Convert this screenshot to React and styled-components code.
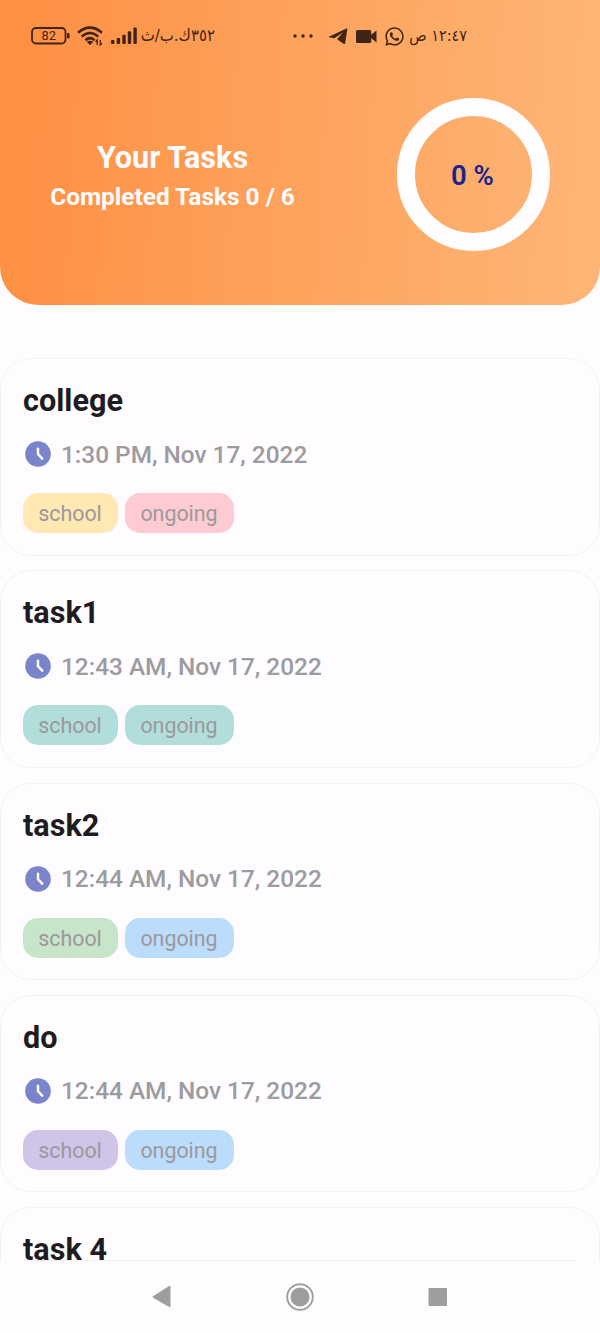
import React from "react";
import styled, { createGlobalStyle } from "styled-components";
import { FaWhatsapp } from "react-icons/fa";

const GlobalStyle = createGlobalStyle`
  * { box-sizing: border-box; }
  body { margin: 0; background: #fefcff; font-family: Roboto, "Liberation Sans", sans-serif; }
`;

const Screen = styled.div`
  width: 600px;
  height: 1333px;
  display: flex;
  flex-direction: column;
  overflow: hidden;
  background: #fefcff;
`;

const Header = styled.header`
  flex: none;
  height: 305px;
  border-radius: 0 0 38px 38px;
  background: linear-gradient(93deg, #ff9145 6%, #fdb475 94%);
`;

const StatusBar = styled.div`
  height: 70px;
  padding: 2px 0 0 31px;
  display: flex;
  align-items: center;
  color: #402414;

  svg { display: block; flex: none; }
`;

const StatusText = styled.span`
  flex: none;
  width: ${(p) => p.$width}px;
  margin-left: ${(p) => p.$gap}px;
  font-family: "DejaVu Sans Condensed", "DejaVu Sans", sans-serif;
  font-stretch: condensed;
  font-size: ${(p) => p.$size}px;
  line-height: 26px;
  white-space: nowrap;
`;

const Spacer = styled.span`
  flex: none;
  width: ${(p) => p.$width}px;
`;

const Summary = styled.div`
  display: flex;
  justify-content: space-between;
  padding: 28px 50px 0;
`;

const SummaryText = styled.div`
  padding-top: 42px;
  width: 245px;
  display: flex;
  flex-direction: column;
  align-items: center;
  color: #fffdff;
  white-space: nowrap;
`;

const Heading = styled.h1`
  margin: 0;
  font-size: 30.6px;
  line-height: 36px;
  font-weight: 700;
`;

const Completed = styled.div`
  margin-top: 6px;
  font-size: 24.4px;
  line-height: 29px;
  font-weight: 700;
`;

const Ring = styled.div`
  width: 153px;
  height: 153px;
  padding: 2px 2px 0 0;
  border: 18px solid #fffdff;
  border-radius: 50%;
  display: flex;
  align-items: center;
  justify-content: center;
  color: #17248b;
  font-size: 27.5px;
  font-weight: 600;
`;

const TaskList = styled.main`
  flex: none;
  height: 956px;
  padding-top: 53px;
  display: flex;
  flex-direction: column;
  gap: 14.75px;
  overflow: hidden;
`;

const Card = styled.article`
  flex: none;
  height: 197.5px;
  padding: 23px 22px 0;
  border: 1px solid #f2f0f3;
  border-radius: 31px;
`;

const TaskName = styled.h2`
  margin: 0;
  font-size: 30.6px;
  line-height: 38px;
  font-weight: 700;
  color: #1e1c1f;
`;

const TimeRow = styled.div`
  margin-top: 18px;
  height: 32px;
  padding-left: 2px;
  display: flex;
  align-items: center;
  gap: 10px;
  font-size: 24.4px;
  font-weight: 500;
  color: #9c9b9d;
  white-space: nowrap;

  svg { display: block; }
`;

const Tags = styled.div`
  display: flex;
  gap: 7px;
  margin-top: 23px;
`;

const Tag = styled.span`
  width: ${(p) => p.$width}px;
  height: 40px;
  padding-right: 1px;
  border-radius: 15px;
  background: ${(p) => p.$color};
  color: #9b999c;
  font-size: 21.4px;
  line-height: 41px;
  text-align: center;
`;

const NavBar = styled.nav`
  flex: none;
  height: 72px;
  display: flex;
  justify-content: center;
  align-items: center;
  position: relative;

  svg { display: block; }
`;

const Divider = styled.div`
  position: absolute;
  top: -1px;
  left: 25px;
  right: 25px;
  height: 1px;
  background: #f1eff1;
`;

const Battery = () => (
  <svg width="40" height="18" viewBox="0 0 40 18">
    <rect x="1" y="1" width="33.5" height="15.5" rx="4" fill="none" stroke="currentColor" strokeWidth="1.8" />
    <rect x="36" y="6" width="2.5" height="5.5" rx="1" fill="currentColor" />
    <text x="17.7" y="13.3" textAnchor="middle" fontFamily="Roboto, sans-serif" fontSize="12.8" fill="currentColor">82</text>
  </svg>
);

const Wifi = () => (
  <svg width="27" height="20" viewBox="0 0 27 20" fill="none" stroke="currentColor" strokeWidth="2.5">
    <path d="M1 6.7Q13-3.4 25 6.7M4.7 10.6Q13 3.4 21.3 10.6M8.4 14.2Q13 10.1 17.6 14.2" />
    <path d="M9.8 15.9Q13 13.4 16.2 15.9L13 19Z" fill="currentColor" stroke="none" />
    <path d="M20.2 19v-5l-1.6 1.8M23.3 14v5l1.6-1.8" strokeWidth="1.3" />
  </svg>
);

const Signal = () => (
  <svg width="27" height="18" viewBox="0 0 27 18" fill="currentColor">
    <rect x="0" y="13" width="3.4" height="4" rx="1" />
    <rect x="5.7" y="11" width="3.4" height="6" rx="1" />
    <rect x="11.3" y="7.7" width="3.4" height="9.3" rx="1" />
    <rect x="16.8" y="4.2" width="3.4" height="12.8" rx="1" />
    <rect x="22.4" y="0.5" width="3.4" height="16.5" rx="1" />
  </svg>
);

const More = () => (
  <svg width="20" height="4" viewBox="0 0 20 4" fill="currentColor">
    <circle cx="2" cy="2" r="1.7" /><circle cx="10" cy="2" r="1.7" /><circle cx="18" cy="2" r="1.7" />
  </svg>
);

const Telegram = () => (
  <svg width="19" height="17" viewBox="0 0 19 17" fill="currentColor">
    <path d="M0.4 8.4L17.4 0.6Q18.5 0.2 18.3 1.5L16.2 15.1Q15.9 16.7 14.5 15.8L8.7 11.7Q8 11 8.8 10.2L14.2 4.3L6.2 9.8Q5.3 10.4 4.3 10.1L0.6 9.4Q-.3 9 .4 8.4Z" />
  </svg>
);

const Camera = () => (
  <svg width="21" height="15" viewBox="0 0 21 15" fill="currentColor">
    <path d="M1.5 1H13.7Q15.2 1 15.2 2.5V5.8L20.5 1.5V13.5L15.2 9.2V12.5Q15.2 14 13.7 14H1.5Q0 14 0 12.5V2.5Q0 1 1.5 1Z" />
  </svg>
);

const Clock = () => (
  <svg width="26" height="26" viewBox="0 0 26 26">
    <circle cx="13" cy="13" r="12.8" fill="#7984cb" />
    <path d="M13 7.7V13.2L17.2 17.6" fill="none" stroke="#fefcff" strokeWidth="2.5" strokeLinecap="round" strokeLinejoin="round" />
  </svg>
);

const tasks = [
  { name: "college", time: "1:30 PM, Nov 17, 2022", school: "#ffe8b2", ongoing: "#ffcbd2" },
  { name: "task1", time: "12:43 AM, Nov 17, 2022", school: "#b1dedb", ongoing: "#b1dedb" },
  { name: "task2", time: "12:44 AM, Nov 17, 2022", school: "#c7e5c9", ongoing: "#bbdcfb" },
  { name: "do", time: "12:44 AM, Nov 17, 2022", school: "#d0c4e9", ongoing: "#bbdcfb" },
  { name: "task 4" },
];

const TaskCard = ({ task }) => (
  <Card>
    <TaskName>{task.name}</TaskName>
    {task.time && (
      <>
        <TimeRow><Clock />{task.time}</TimeRow>
        <Tags>
          <Tag $width={95} $color={task.school}>school</Tag>
          <Tag $width={109} $color={task.ongoing}>ongoing</Tag>
        </Tags>
      </>
    )}
  </Card>
);

export default function App() {
  return (
    <Screen>
      <GlobalStyle />
      <Header>
        <StatusBar>
          <Battery />
          <Spacer $width={6} />
          <Wifi />
          <Spacer $width={7} />
          <Signal />
          <StatusText dir="rtl" $width={74} $gap={3} $size={16.6}>٣٥٢ك.ب/ث</StatusText>
          <Spacer $width={78} />
          <More />
          <Spacer $width={16} />
          <Telegram />
          <Spacer $width={8} />
          <Camera />
          <Spacer $width={7} />
          <FaWhatsapp size={21} />
          <StatusText dir="rtl" $width={58} $gap={4} $size={16}>١٢:٤٧ ص</StatusText>
        </StatusBar>
        <Summary>
          <SummaryText>
            <Heading>Your Tasks</Heading>
            <Completed>Completed Tasks 0 / 6</Completed>
          </SummaryText>
          <Ring>0 %</Ring>
        </Summary>
      </Header>
      <TaskList>
        {tasks.map((task) => (
          <TaskCard key={task.name} task={task} />
        ))}
      </TaskList>
      <NavBar>
        <Divider />
        <svg width="300" height="30" viewBox="0 0 300 30" fill="#9f9e9f">
          <path d="M3 14.2L18.7 4.2Q20.5 3.5 20.5 5V24Q20.5 25.8 18.7 24.8L3 15.8Q1.8 15 3 14.2Z" />
          <circle cx="150" cy="15" r="12.8" fill="none" stroke="#9f9e9f" strokeWidth="1.9" />
          <circle cx="150" cy="15" r="9.5" />
          <rect x="278.5" y="6" width="18.5" height="18" rx="1" />
        </svg>
      </NavBar>
    </Screen>
  );
}
